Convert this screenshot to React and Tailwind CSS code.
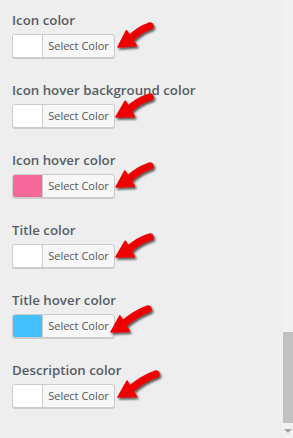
const rows = [
  { label: 'Icon color', swatch: '#ffffff', tip: [118, 47], tail: [150, 26] },
  { label: 'Icon hover background color', swatch: '#ffffff', tip: [116, 47], tail: [150, 27] },
  { label: 'Icon hover color', swatch: '#f7699a', tip: [116, 47], tail: [150, 26] },
  { label: 'Title color', swatch: '#ffffff', tip: [116, 47], tail: [150, 27] },
  { label: 'Title hover color', swatch: '#44c0fc', tip: [111, 52], tail: [148, 29] },
  { label: 'Description color', swatch: '#ffffff', tip: [118, 47], tail: [156, 24] },
]

function Arrow({ tip, tail, id }) {
  const [x1, y1] = tip
  const [x2, y2] = tail
  const dx = x2 - x1
  const dy = y2 - y1
  const len = Math.hypot(dx, dy)
  const ux = dx / len
  const uy = dy / len
  const px = -uy
  const py = ux
  const headLen = 16
  const half = 9
  const bx = x1 + ux * headLen
  const by = y1 + uy * headLen
  const mx = (bx + x2) / 2 - px * 3
  const my = (by + y2) / 2 - py * 3

  return (
    <svg className="absolute inset-0 pointer-events-none overflow-visible" width="293" height="70">
      <defs>
        <filter id={id} x="-50%" y="-50%" width="200%" height="200%">
          <feDropShadow dx="1.5" dy="2" stdDeviation="1.3" floodColor="#000" floodOpacity="0.65" />
        </filter>
      </defs>
      <g filter={`url(#${id})`}>
        <path
          d={`M${bx - ux * 2} ${by - uy * 2} Q${mx} ${my} ${x2} ${y2}`}
          stroke="#ee0000"
          strokeWidth="7.5"
          strokeLinecap="round"
          fill="none"
        />
        <polygon
          points={`${x1},${y1} ${bx + px * half},${by + py * half} ${bx - px * half},${by - py * half}`}
          fill="#ee0000"
          stroke="#ee0000"
          strokeWidth="1.5"
          strokeLinejoin="round"
        />
      </g>
    </svg>
  )
}

export default function App() {
  return (
    <div className="w-[293px] h-[438px] bg-[#eeeeee] flex overflow-hidden font-['Open_Sans',sans-serif]">
      <div className="flex-1">
        {rows.map((row, i) => (
          <div key={row.label} className="relative h-[70px] pt-[10px] pl-[12px]">
            <div className="h-[20px] leading-[20px] text-[13.3px] font-semibold text-[#555d66] whitespace-nowrap">
              {row.label}
            </div>
            <div className="mt-[4px] flex w-[103px] h-[24px] border border-[#cccccc] rounded-[3px] bg-[#f7f7f7] shadow-[0_1px_0_#cccccc] overflow-hidden">
              <div className="w-[30px] h-full border-r border-[#cccccc]" style={{ backgroundColor: row.swatch }}></div>
              <div className="flex-1 flex items-center justify-center text-[11px] text-[#555555]">
                Select Color
              </div>
            </div>
            <Arrow tip={row.tip} tail={row.tail} id={`shadow-${i}`} />
          </div>
        ))}
      </div>
      <div className="w-[10px] h-full bg-[#f1f1f1] flex flex-col">
        <div className="h-[332px]"></div>
        <div className="h-[91px] bg-[#c1c1c1]"></div>
        <div className="flex-1 flex items-center justify-center">
          <div className="w-0 h-0 border-l-[4px] border-r-[4px] border-t-[4px] border-l-transparent border-r-transparent border-t-[#a3a3a3]"></div>
        </div>
      </div>
    </div>
  )
}
